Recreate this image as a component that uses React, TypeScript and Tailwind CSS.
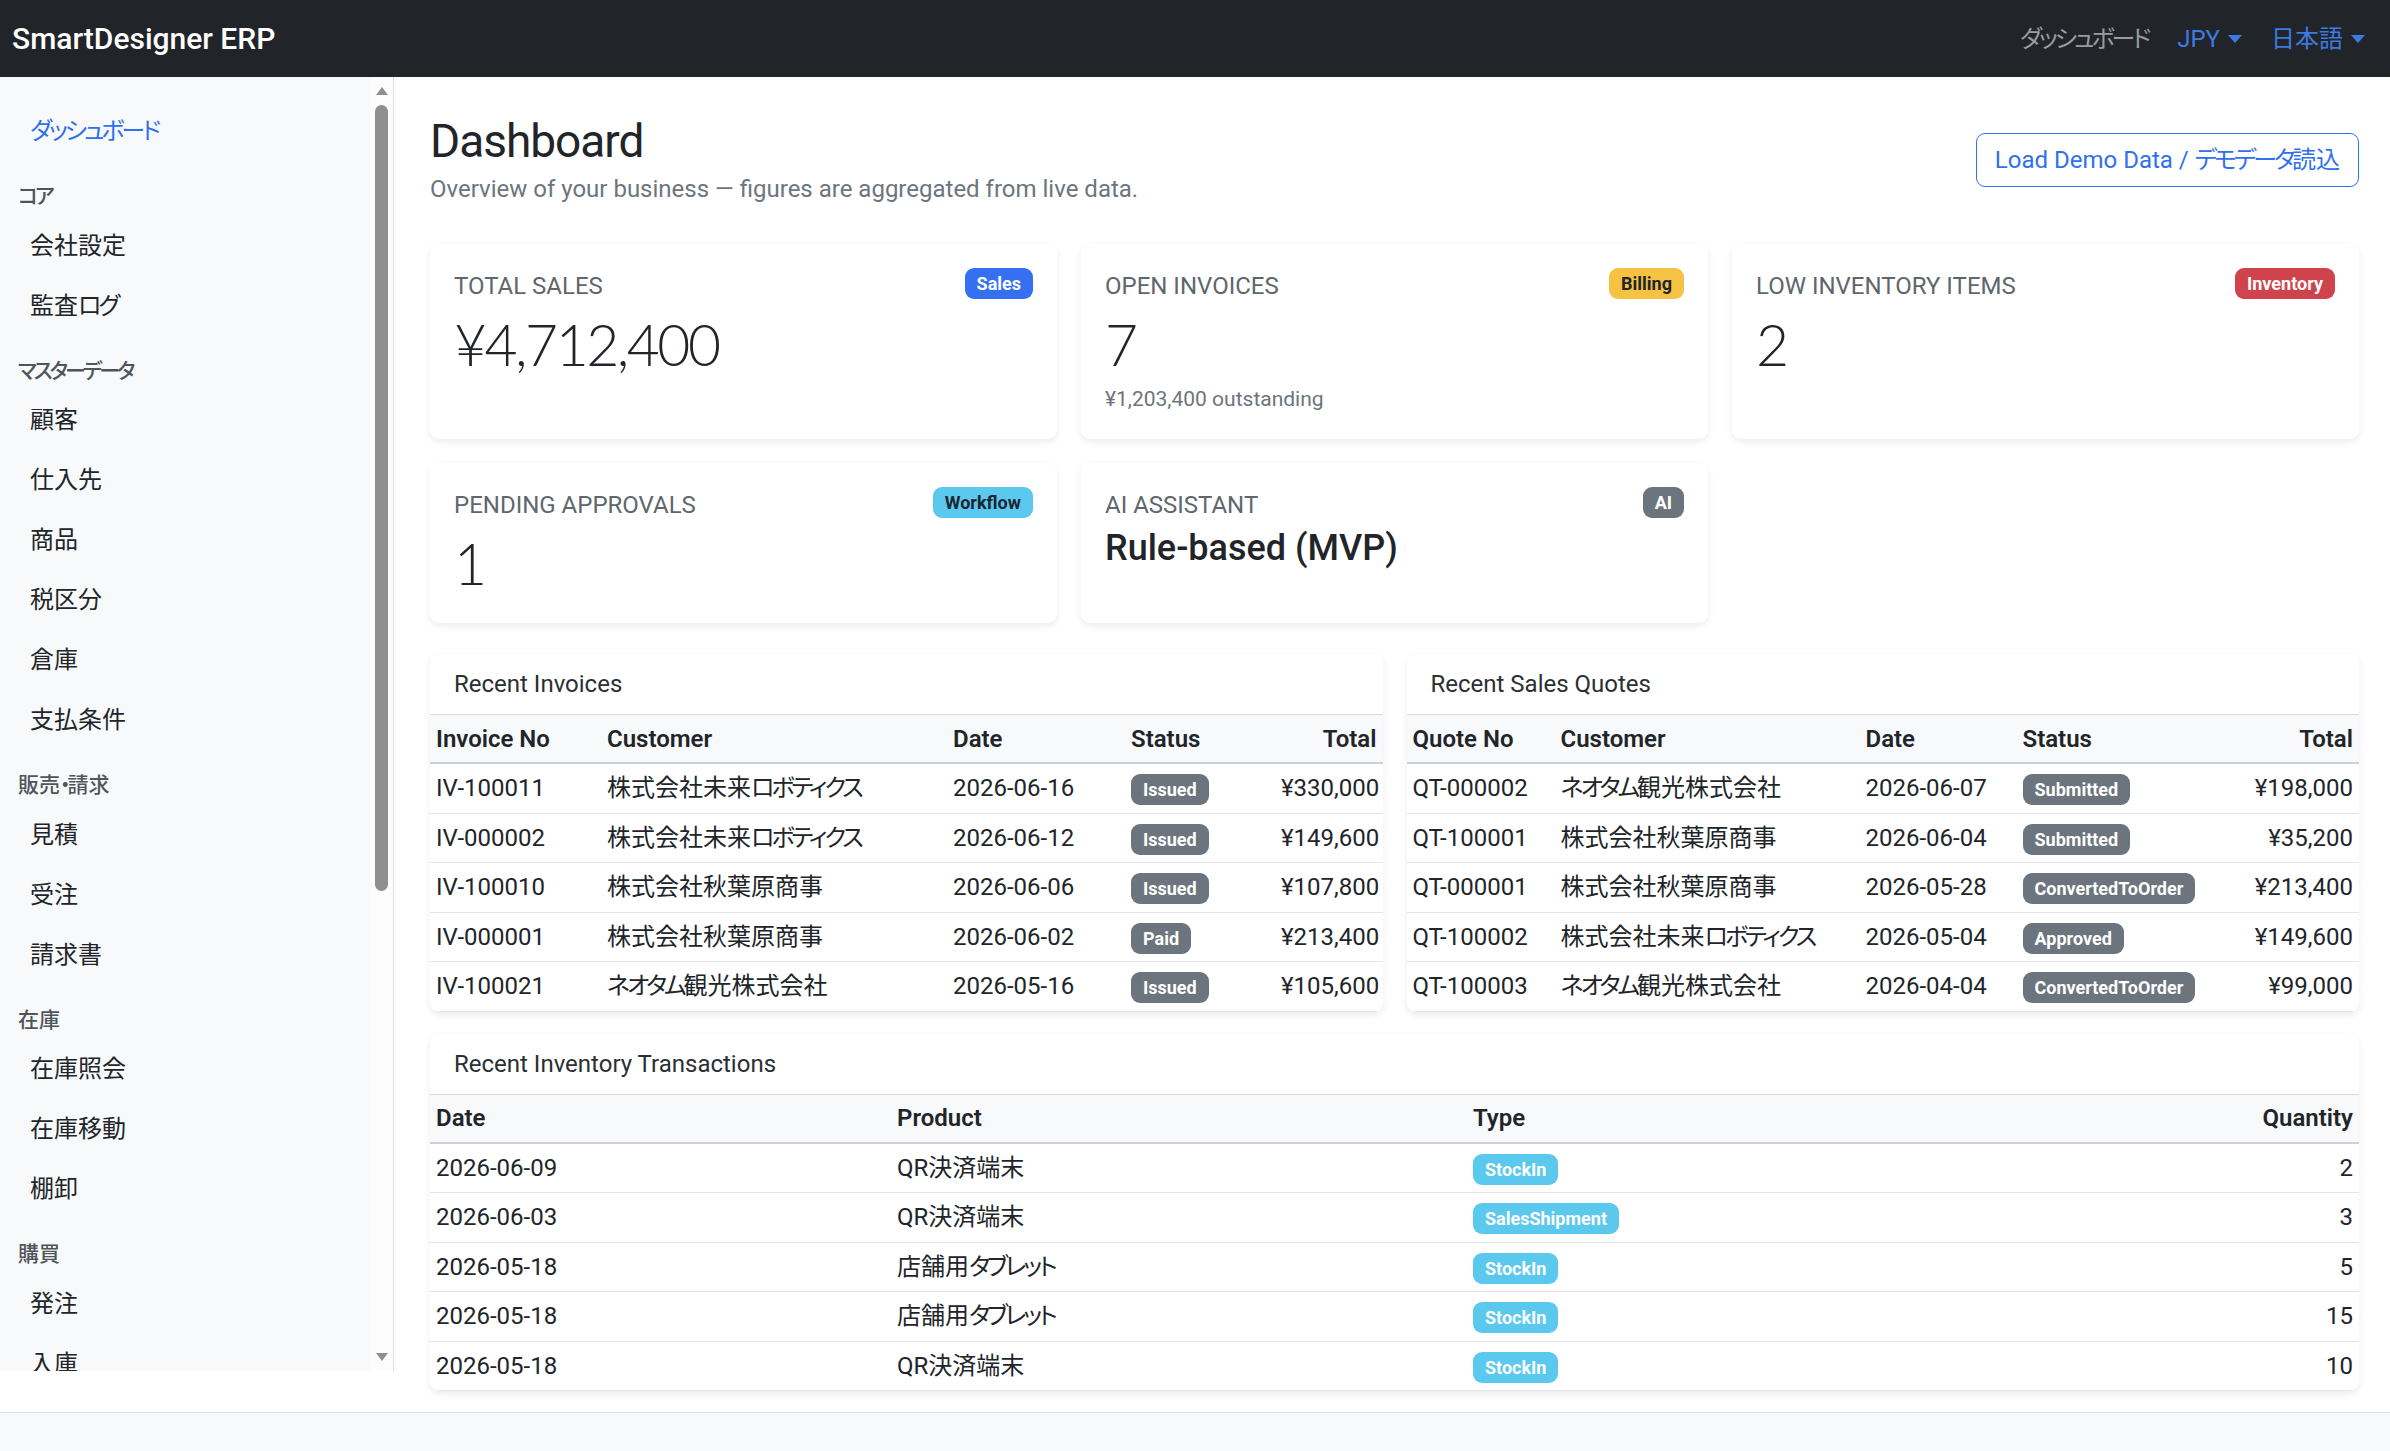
import React from "react";

function J({ t }: { t: string }) {
  const parts = t.split(/([\u30A0-\u30FF]+)/);
  return (
    <>
      {parts.map((p, i) =>
        /[\u30A0-\u30FF]/.test(p) ? (
          <span key={i} className="tracking-[-3px]">
            {p}
          </span>
        ) : (
          <React.Fragment key={i}>{p}</React.Fragment>
        )
      )}
    </>
  );
}

const Caret = () => (
  <span className="ml-[8px] inline-block h-0 w-0 border-x-[7px] border-t-[8px] border-x-transparent border-t-current" />
);

const badgeBase = "inline-block rounded-[9px] px-[12px] py-[6px] text-[18px] font-bold leading-[19px] whitespace-nowrap";

type Section = { title: string; items: string[] };
const sections: Section[] = [
  { title: "コア", items: ["会社設定", "監査ログ"] },
  { title: "マスターデータ", items: ["顧客", "仕入先", "商品", "税区分", "倉庫", "支払条件"] },
  { title: "販売・請求", items: ["見積", "受注", "請求書"] },
  { title: "在庫", items: ["在庫照会", "在庫移動", "棚卸"] },
  { title: "購買", items: ["発注", "入庫"] },
];

function Sidebar() {
  return (
    <aside className="flex h-[1294px] w-[394px] shrink-0 border-r border-[#dee2e6]">
      <div className="w-[370px] overflow-hidden bg-[#f8f9fa] px-[18px] pt-[24px]">
        <div className="py-[12px] pl-[12px] text-[24px] leading-[36px] text-[#2f6ff0]">
          <J t="ダッシュボード" />
        </div>
        {sections.map((s) => (
          <div key={s.title} className="mt-[20px]">
            <div className="mb-[3px] text-[21px] font-medium leading-[31.5px] text-[#4f555b]">
              <J t={s.title} />
            </div>
            {s.items.map((it) => (
              <div key={it} className="py-[12px] pl-[12px] text-[24px] leading-[36px] text-[#212529]">
                <J t={it} />
              </div>
            ))}
          </div>
        ))}
      </div>
      <div className="flex w-[23px] flex-col items-center bg-[#fcfcfc] pb-[10px] pt-[10px]">
        <svg width="12" height="8" viewBox="0 0 12 8">
          <path d="M6 0 L12 8 L0 8 Z" fill="#8f8f8f" />
        </svg>
        <div className="mt-[10px] h-[786px] w-[13px] rounded-full bg-[#8f8f8f]" />
        <div className="mt-auto">
          <svg width="12" height="8" viewBox="0 0 12 8">
            <path d="M0 0 L12 0 L6 8 Z" fill="#8f8f8f" />
          </svg>
        </div>
      </div>
    </aside>
  );
}

function StatCard({
  label,
  badge,
  badgeClass,
  children,
}: {
  label: string;
  badge: string;
  badgeClass: string;
  children: React.ReactNode;
}) {
  return (
    <div className="rounded-[9px] bg-white p-[24px] shadow-[0_3px_7px_rgba(0,0,0,0.08)]">
      <div className="mb-[4px] flex items-start justify-between">
        <div className="text-[24px] uppercase leading-[36px] text-[#5f666c]">{label}</div>
        <span className={badgeClass}>{badge}</span>
      </div>
      {children}
    </div>
  );
}

type Col = { label: string; w: string; right?: boolean };

function DataTable({ title, cols, rows }: { title: string; cols: Col[]; rows: React.ReactNode[][] }) {
  return (
    <div className="overflow-hidden rounded-[9px] bg-white shadow-[0_3px_7px_rgba(0,0,0,0.08)]">
      <div className="border-b border-[#d8dbde] px-[24px] py-[12px] text-[24px] font-normal leading-[36px] text-[#2b2f33]">
        {title}
      </div>
      <table className="w-full table-fixed border-collapse text-[24px] leading-[36px] text-[#212529]">
        <thead>
          <tr className="border-b-2 border-[#cdd1d5] bg-[#f8f9fa]">
            {cols.map((c) => (
              <th
                key={c.label}
                className={`${c.w} px-[6px] py-[5.5px] font-semibold ${c.right ? "text-right" : "text-left"}`}
              >
                {c.label}
              </th>
            ))}
          </tr>
        </thead>
        <tbody>
          {rows.map((r, i) => (
            <tr key={i} className="border-b border-[#e3e5e8]">
              {r.map((cell, j) => (
                <td key={j} className={`px-[6px] py-[6.25px] whitespace-nowrap ${cols[j].right ? "text-right" : "text-left"}`}>
                  {typeof cell === "string" ? <J t={cell} /> : cell}
                </td>
              ))}
            </tr>
          ))}
        </tbody>
      </table>
    </div>
  );
}

const gray = (t: string) => <span className={`${badgeBase} bg-[#6c757d] text-white`}>{t}</span>;
const info = (t: string) => <span className={`${badgeBase} bg-[#5bc8ee] text-white`}>{t}</span>;

const displayNum = "font-['Lato','Roboto',sans-serif] text-[57px] font-light leading-[72px] tracking-[-2.5px] text-[#212529]";

export default function App() {
  const invoiceRows: React.ReactNode[][] = [
    ["IV-100011", "株式会社未来ロボティクス", "2026-06-16", gray("Issued"), "¥330,000"],
    ["IV-000002", "株式会社未来ロボティクス", "2026-06-12", gray("Issued"), "¥149,600"],
    ["IV-100010", "株式会社秋葉原商事", "2026-06-06", gray("Issued"), "¥107,800"],
    ["IV-000001", "株式会社秋葉原商事", "2026-06-02", gray("Paid"), "¥213,400"],
    ["IV-100021", "ネオタム観光株式会社", "2026-05-16", gray("Issued"), "¥105,600"],
  ];
  const quoteRows: React.ReactNode[][] = [
    ["QT-000002", "ネオタム観光株式会社", "2026-06-07", gray("Submitted"), "¥198,000"],
    ["QT-100001", "株式会社秋葉原商事", "2026-06-04", gray("Submitted"), "¥35,200"],
    ["QT-000001", "株式会社秋葉原商事", "2026-05-28", gray("ConvertedToOrder"), "¥213,400"],
    ["QT-100002", "株式会社未来ロボティクス", "2026-05-04", gray("Approved"), "¥149,600"],
    ["QT-100003", "ネオタム観光株式会社", "2026-04-04", gray("ConvertedToOrder"), "¥99,000"],
  ];
  const invRows: React.ReactNode[][] = [
    ["2026-06-09", "QR決済端末", info("StockIn"), "2"],
    ["2026-06-03", "QR決済端末", info("SalesShipment"), "3"],
    ["2026-05-18", "店舗用タブレット", info("StockIn"), "5"],
    ["2026-05-18", "店舗用タブレット", info("StockIn"), "15"],
    ["2026-05-18", "QR決済端末", info("StockIn"), "10"],
  ];

  return (
    <div className="min-h-[1451px] bg-white font-['Roboto','Noto_Sans_CJK_JP',sans-serif] text-[#212529] [font-feature-settings:'palt']">
      <header className="flex h-[77px] items-center justify-between bg-[#212529] pl-[12px] pr-[25px]">
        <div className="text-[30px] font-medium leading-[45px] text-white">SmartDesigner ERP</div>
        <nav className="flex items-center gap-[29px] text-[24px] leading-[36px]">
          <span className="text-[#9a9c9f]">
            <J t="ダッシュボード" />
          </span>
          <span className="flex items-center text-[#3d7be0]">
            JPY
            <Caret />
          </span>
          <span className="flex items-center text-[#3d7be0]">
            日本語
            <Caret />
          </span>
        </nav>
      </header>

      <div className="flex items-start">
        <Sidebar />
        <main className="min-w-0 flex-1 pb-[21px] pl-[36px] pr-[31px] pt-[36px]">
          <div className="mb-[37px] flex items-center justify-between">
            <div>
              <h2 className="text-[46px] font-normal leading-[57.6px] tracking-[-1px] text-[#212529]">Dashboard</h2>
              <p className="text-[24px] leading-[36px] text-[#6c757d]">
                Overview of your business — figures are aggregated from live data.
              </p>
            </div>
            <button className="rounded-[9px] border-[1.5px] border-[#3070ee] bg-white px-[18px] py-[8px] text-[24px] leading-[36px] text-[#3070ee]">
              <J t="Load Demo Data / デモデータ読込" />
            </button>
          </div>

          <div className="grid grid-cols-3 gap-[24px]">
            <StatCard label="Total Sales" badge="Sales" badgeClass={`${badgeBase} bg-[#3570f0] text-white`}>
              <div className={displayNum}>¥4,712,400</div>
            </StatCard>
            <StatCard label="Open Invoices" badge="Billing" badgeClass={`${badgeBase} bg-[#f5c244] text-[#212529]`}>
              <div className={displayNum}>7</div>
              <div className="mt-[4px] text-[21px] leading-[31.5px] text-[#6c757d]">¥1,203,400 outstanding</div>
            </StatCard>
            <StatCard label="Low Inventory Items" badge="Inventory" badgeClass={`${badgeBase} bg-[#cf444c] text-white`}>
              <div className={displayNum}>2</div>
            </StatCard>
            <StatCard label="Pending Approvals" badge="Workflow" badgeClass={`${badgeBase} bg-[#5bc8ee] text-[#1c2530]`}>
              <div className={displayNum}>1</div>
            </StatCard>
            <StatCard label="AI Assistant" badge="AI" badgeClass={`${badgeBase} bg-[#6c757d] text-white`}>
              <div className="text-[36px] font-medium leading-[43.2px]">Rule-based (MVP)</div>
            </StatCard>
          </div>

          <div className="mt-[31px] grid grid-cols-2 gap-[24px]">
            <DataTable
              title="Recent Invoices"
              cols={[
                { label: "Invoice No", w: "w-[171px]" },
                { label: "Customer", w: "w-[346px]" },
                { label: "Date", w: "w-[178px]" },
                { label: "Status", w: "w-[150px]" },
                { label: "Total", w: "w-auto", right: true },
              ]}
              rows={invoiceRows}
            />
            <DataTable
              title="Recent Sales Quotes"
              cols={[
                { label: "Quote No", w: "w-[148px]" },
                { label: "Customer", w: "w-[305px]" },
                { label: "Date", w: "w-[157px]" },
                { label: "Status", w: "w-[200px]" },
                { label: "Total", w: "w-auto", right: true },
              ]}
              rows={quoteRows}
            />
          </div>

          <div className="mt-[22px]">
            <DataTable
              title="Recent Inventory Transactions"
              cols={[
                { label: "Date", w: "w-[461px]" },
                { label: "Product", w: "w-[576px]" },
                { label: "Type", w: "w-auto" },
                { label: "Quantity", w: "w-[180px]", right: true },
              ]}
              rows={invRows}
            />
          </div>
        </main>
      </div>

      <footer className="h-[40px] border-t border-[#dee2e6] bg-[#f8f9fa]" />
    </div>
  );
}
